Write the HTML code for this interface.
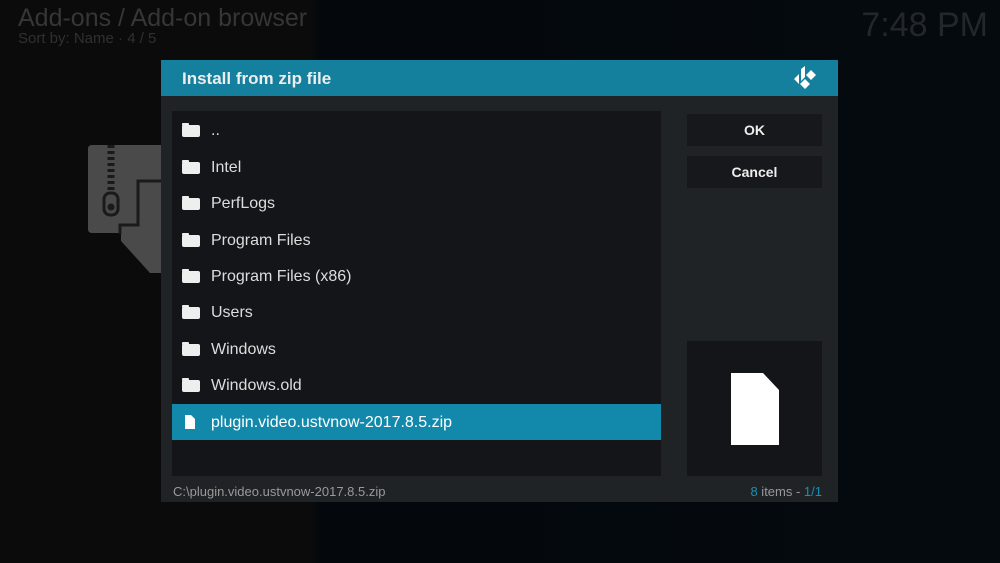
<!DOCTYPE html><html><head><style>
*{margin:0;padding:0;box-sizing:border-box}
body{width:1000px;height:563px;overflow:hidden;background:linear-gradient(90deg,#0b0b0b 0,#0b0b0b 310px,#04080c 320px,#050a0f 1000px);font-family:"Liberation Sans",sans-serif;position:relative;color:#fff}
.t1{position:absolute;left:18px;top:4px;font-size:25px;color:#363636}
.t2{position:absolute;left:18px;top:30px;font-size:15px;color:#303030}
.clk{position:absolute;right:12px;top:6px;font-size:34px;color:#23272b}
.dlg{position:absolute;left:161px;top:60px;width:677px;height:442px;background:#1f2326}
.hd{height:36px;background:#157f9e;padding-left:21px;font-size:17px;font-weight:bold;line-height:37px;color:#eee}
.list{position:absolute;left:11px;top:51px;width:489px;height:365px;background:#131518}
.row{position:absolute;left:0;width:489px;height:36px;line-height:38px;font-size:16px;color:#ddd;padding-left:39px}
.row.sel{background:#1289ab;color:#fff}
.ic{position:absolute;left:10px;top:13px;width:18px;height:12px;background:#eee;border-radius:2px}
.ic:before{content:"";position:absolute;left:0;top:-2px;width:7px;height:3px;background:#eee;border-radius:1px}
.btn{position:absolute;left:526px;width:135px;height:32px;background:#16181b;text-align:center;line-height:33px;font-size:14px;font-weight:bold;color:#eee}
.prev{position:absolute;left:526px;top:281px;width:135px;height:135px;background:#131518}
.ft{position:absolute;top:424px;font-size:13px;color:#999}
</style></head><body>
<div class="t1">Add-ons / Add-on browser</div>
<div class="t2">Sort by: Name · 4 / 5</div>
<div class="clk">7:48 PM</div>
<svg style="position:absolute;left:88px;top:145px" width="80" height="130"><path d="M0 4Q0 0 4 0H80V128H62L33 96V88H4Q0 88 0 84Z" fill="#4a4a4a"/><path d="M23 0V50" stroke="#1a1a1a" stroke-width="7" stroke-dasharray="3 3"/><rect x="16" y="48" width="14" height="22" rx="6" fill="#4a4a4a" stroke="#1a1a1a" stroke-width="3"/><circle cx="23" cy="62" r="3.5" fill="#1a1a1a"/><path d="M32 89V80H50V36H80" fill="none" stroke="#1a1a1a" stroke-width="3"/></svg>
<div class="dlg">
<div class="hd">Install from zip file</div>
<svg style="position:absolute;left:631px;top:6px" width="26" height="26" viewBox="0 0 26 26"><path d="M2 13L7 8V18Z M9 3L13 0V11L9 15Z M14 9L19 4L24 9L19 14Z M8 18L13 13L18 18L13 23Z" fill="#fff"/></svg>
<div class="list">
<div class="row" style="top:1px"><span class="ic"></span>..</div>
<div class="row" style="top:38px"><span class="ic"></span>Intel</div>
<div class="row" style="top:74px"><span class="ic"></span>PerfLogs</div>
<div class="row" style="top:111px"><span class="ic"></span>Program Files</div>
<div class="row" style="top:147px"><span class="ic"></span>Program Files (x86)</div>
<div class="row" style="top:183px"><span class="ic"></span>Users</div>
<div class="row" style="top:220px"><span class="ic"></span>Windows</div>
<div class="row" style="top:256px"><span class="ic"></span>Windows.old</div>
<div class="row sel" style="top:293px"><svg style="position:absolute;left:13px;top:11px" width="10" height="14"><path d="M0 0H6L10 4V14H0Z" fill="#fff"/></svg>plugin.video.ustvnow-2017.8.5.zip</div>
</div>
<div class="btn" style="top:54px">OK</div>
<div class="btn" style="top:96px">Cancel</div>
<div class="prev"><svg style="position:absolute;left:44px;top:32px" width="48" height="72"><path d="M0 0H32L48 17V72H0Z" fill="#fff"/></svg></div>
<div class="ft" style="left:12px">C:\plugin.video.ustvnow-2017.8.5.zip</div>
<div class="ft" style="right:16px"><span style="color:#1a8fb4">8</span> items - <span style="color:#1a8fb4">1/1</span></div>
</div>
</body></html>
